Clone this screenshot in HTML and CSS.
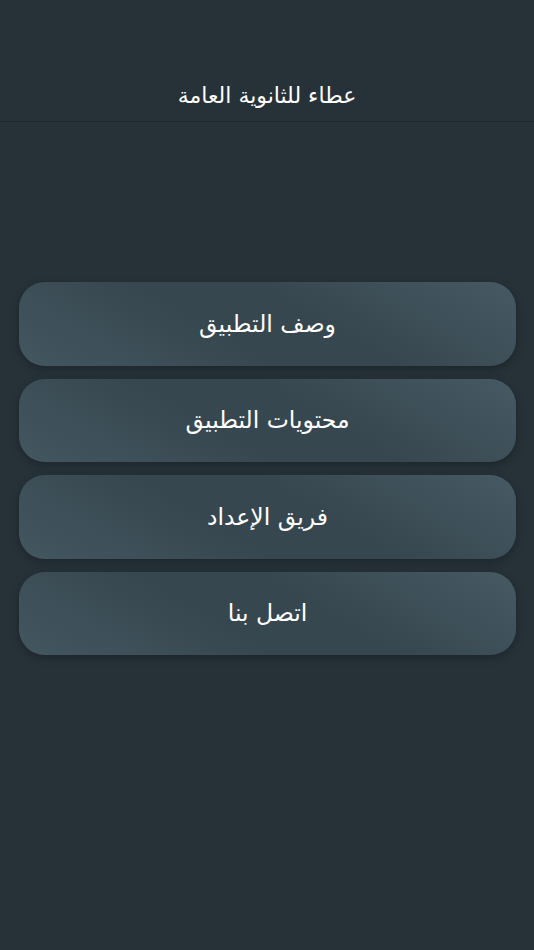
FILE: index.html
```html
<!DOCTYPE html>
<html lang="ar" dir="rtl">
<head>
    <meta charset="UTF-8">
    <meta name="viewport" content="width=device-width, initial-scale=1.0">
    <title>عطاء للثانوية العامة</title>
    <link rel="stylesheet" href="styles.css">
</head>
<body>
    <!-- top bar -->
    <div class="app-header">
        <h1>عطاء للثانوية العامة</h1>
    </div>

    <!-- main menu -->
    <div class="menu-container">
        <button class="menu-button">وصف التطبيق</button>
        <button class="menu-button">محتويات التطبيق</button>
        <button class="menu-button">فريق الإعداد</button>
        <button class="menu-button">اتصل بنا</button>
    </div>
</body>
</html>
```

FILE: styles.css
```css
body {
    margin: 0;
    height: 950px;
    background-color: #263238;
    font-family: "DejaVu Sans", sans-serif;
    color: #ffffff;
}

.app-header {
    height: 121px;
    display: flex;
    align-items: flex-end;
    justify-content: center;
    border-bottom: 1px solid #1e272c;
}

.app-header h1 {
    margin: 0 0 10px 0;
    font-size: 22px;
    font-weight: normal;
    line-height: 30px;
}

.menu-container {
    display: flex;
    flex-direction: column;
    gap: 13px;
    padding: 160px 18px 0 19px;
}

.menu-button {
    height: 83.5px;
    border: none;
    border-radius: 26px;
    background: linear-gradient(30deg, #435761 0%, #37474f 40%, #37474f 60%, #465a64 100%);
    box-shadow: 0 3px 8px rgba(0, 0, 0, 0.25);
    color: #ffffff;
    font-family: inherit;
    font-size: 23.5px;
    font-weight: normal;
    cursor: pointer;
}
```
